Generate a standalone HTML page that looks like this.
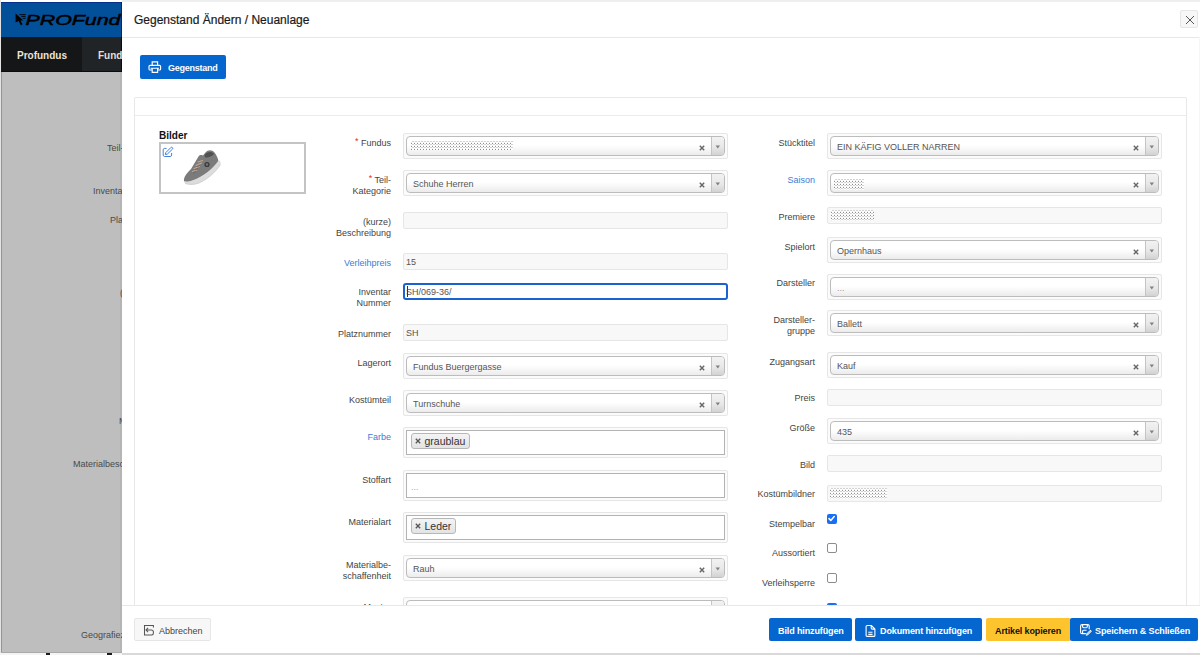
<!DOCTYPE html><html><head><meta charset="utf-8"><style>
*{margin:0;padding:0;box-sizing:border-box}
html,body{width:1200px;height:655px;overflow:hidden;background:#fff;font-family:"Liberation Sans",sans-serif;position:relative}
div,span{position:absolute}
.lbl{font-size:9px;text-align:right;white-space:nowrap;color:#555}
.req{position:relative;color:#e0302c;font-size:9px;vertical-align:top;top:-1.5px}
.so{height:26px;border:1px solid #e6e6e6;border-radius:2px;background:#fbfbfb}
.si{left:2px;top:2px;right:2px;bottom:2px;border:1px solid #bcbcbc;border-radius:4px;background:linear-gradient(to bottom,#fff 0%,#fff 45%,#ececec 100%);overflow:hidden}
.st{left:6px;top:4px;font-size:9px;color:#555;white-space:nowrap;line-height:12px}
.st.ph{color:#999}
.sx{right:19.5px;top:8px;width:6px;height:6px}
.sa{right:0;top:0;bottom:0;width:13px;border-left:1px solid #c4c4c4;background:linear-gradient(to bottom,#f2f2f2 0%,#e8e8e8 55%,#d2d2d2 100%)}
.sa b{position:absolute;left:3.5px;top:8.5px;width:0;height:0;border-left:2px solid transparent;border-right:2px solid transparent;border-top:3px solid #777}
.inp{height:17px;border:1px solid #e6e6e6;border-radius:2px;background:#f8f8f8}
.inp.foc{border:2px solid #1a62d0;background:#fff;border-radius:3px}
.it{left:2px;top:3px;font-size:9px;color:#555;line-height:11px;white-space:nowrap}
.foc .it{left:1px;top:2px}
.dot{background-color:#fff;background-image:conic-gradient(from 270deg at 1px 1px,#8e8e8e 90deg,transparent 0),conic-gradient(from 270deg at 2px 1px,#d2d2d2 90deg,transparent 0),conic-gradient(from 270deg at 1px 1px,#ececec 90deg,transparent 0);background-size:3px 3px,3px 3px,3px 3px;background-position:0 2px,1px 0,0 1px}
.mo{height:31px;border:1px solid #e6e6e6;border-radius:2px;background:#fbfbfb}
.mi{left:2px;top:2px;right:2px;bottom:2px;border:1px solid #b3b3b3;background:#fff}
.tag{left:3.5px;top:2px;height:16px;padding:0 4px 0 13px;border:1px solid #b7b7b7;border-radius:3px;background:linear-gradient(to bottom,#f4f4f4,#e3e3e3);font-size:10.5px;line-height:14px;color:#333;position:absolute;white-space:nowrap}
.tag .tx{left:3px;top:4px;width:6px;height:6px}
.mph{left:4px;top:8px;font-size:9px;color:#aaa}
.cb{width:10px;height:10px;border:1px solid #8c8c8c;border-radius:2px;background:#fff}
.cb.on{border:none;background:#1a6ef5}
.cb svg{position:absolute;left:0;top:0}
.btn{height:23px;border-radius:2px;background:#0566cf;color:#fff;font-size:9px;font-weight:bold;white-space:nowrap;letter-spacing:-0.12px}

</style></head><body>
<div style="left:122px;top:0;width:1078px;height:2px;background:#efefef"></div>
<div style="left:0;top:0;width:122px;height:655px;overflow:hidden">
<div style="left:1px;top:2px;width:121px;height:35px;background:#03509a;border-top:1px solid #062f8c"></div><div style="left:121px;top:2px;width:1px;height:35px;background:#0a1f7a"></div>
<div style="left:1px;top:37px;width:81px;height:35px;background:#141618"></div>
<div style="left:82px;top:37px;width:40px;height:35px;background:#212427"></div><div style="left:1px;top:71px;width:121px;height:1px;background:#0b0c0d"></div><div style="left:121px;top:37px;width:1px;height:35px;background:#0a0a14"></div>
<div style="left:0;top:0;width:1px;height:655px;background:#e4e4e4"></div><div style="left:1px;top:72px;width:121px;height:581px;background:#bebebe"></div><div style="left:1px;top:72px;width:1px;height:581px;background:#959595"></div><div style="left:120px;top:72px;width:2px;height:581px;background:#b5b5b5"></div>
<div style="left:17px;top:49px;font-size:10px;font-weight:bold;color:#ece4d6;line-height:14px">Profundus</div>
<div style="left:98px;top:49px;font-size:10px;font-weight:bold;color:#e6dfd2;line-height:14px">Fundus</div>
<svg style="position:absolute;left:12px;top:10px" width="14" height="17" viewBox="0 0 14 17"><path d="M3.6 3.6 L3.6 12.6 L6.6 10.9 L8.8 15.2 L10.6 14.3 L8.4 10.4 L11.4 10.4 Z" fill="#000"/><path d="M7.3 4.6 H13.6 M9.2 6.4 H13.6 M10.7 8.3 H13.6" stroke="#000" stroke-width="0.9"/></svg>
<svg style="position:absolute;left:25px;top:10px" width="110" height="20"><text x="0.5" y="15" font-family="Liberation Sans" font-style="italic" font-size="15" textLength="95" lengthAdjust="spacingAndGlyphs" fill="#000" stroke="#000" stroke-width="0.5">PROFund</text></svg>
<div style="left:107px;top:143px;font-size:9px;color:#4a4a4a;line-height:11px;white-space:nowrap">Teil-</div>
<div style="left:93px;top:186px;font-size:9px;color:#4a4a4a;line-height:11px;white-space:nowrap">Inventar</div>
<div style="left:110px;top:215px;font-size:9px;color:#4a4a4a;line-height:11px;white-space:nowrap">Platz</div>
<div style="left:120px;top:288px;font-size:9px;color:#4a4a4a;line-height:11px;white-space:nowrap">(kurze</div>
<div style="left:119px;top:416px;font-size:9px;color:#4a4a4a;line-height:11px;white-space:nowrap">Material</div>
<div style="left:73px;top:459px;font-size:9px;color:#4a4a4a;line-height:11px;white-space:nowrap">Materialbeschaffenheit</div>
<div style="left:81px;top:630px;font-size:9px;color:#4a4a4a;line-height:11px;white-space:nowrap">Geografiezone</div>
</div>
<div style="left:122px;top:2px;width:1078px;height:651px;background:#fff"></div>
<div style="left:122px;top:653px;width:1078px;height:2px;background:#d9d9d9"></div>
<div style="left:0;top:653px;width:122px;height:2px;background:#f4f4f4"></div><div style="left:46px;top:653px;width:4px;height:2px;background:#1a1a1a"></div><div style="left:107px;top:653px;width:5px;height:2px;background:#1a1a1a"></div><div style="left:1px;top:652px;width:121px;height:1px;background:#aaaaaa"></div>
<div style="left:134px;top:13px;font-size:12px;color:#1a1a1a;line-height:14px;white-space:nowrap;-webkit-text-stroke:0.2px #1a1a1a">Gegenstand Ändern / Neuanlage</div>
<div style="left:122px;top:37px;width:1078px;height:1px;background:#e8e8e8"></div>
<div style="left:1180px;top:10px;width:18px;height:18px;border:1px solid #e6e6e6;border-radius:2px;background:#f7f7f7"><svg style="position:absolute;left:3.5px;top:3.5px" width="10" height="10" viewBox="0 0 10 10"><path d="M1 1 L9 9 M9 1 L1 9" stroke="#444" stroke-width="0.9"/></svg></div>
<div class="btn" style="left:140px;top:55px;width:86px;height:24px"><svg style="position:absolute;left:8px;top:5px" width="14" height="14" viewBox="0 0 14 14"><path d="M4.2 4.8 V1.8 H9.6 V4.8 M4.2 10 H2.1 C1.4 10 1 9.6 1 8.9 V6.5 C1 5.8 1.4 5.4 2.1 5.4 H11.5 C12.2 5.4 12.6 5.8 12.6 6.5 V8.9 C12.6 9.6 12.2 10 11.5 10 H9.6 M2.6 8.2 H11 M4.2 8.2 V12.4 H9.6 V8.2" fill="none" stroke="#fff" stroke-width="1.15"/></svg><div style="left:28px;top:7px;line-height:12px;letter-spacing:-0.25px">Gegenstand</div></div>
<div style="left:134px;top:97px;width:1053px;height:520px;border:1px solid #e8e8e8;border-radius:2px"></div>
<div style="left:135px;top:115px;width:1051px;height:1px;background:#ececec"></div>
<div style="left:159px;top:130px;font-size:10px;font-weight:bold;color:#111;line-height:12px">Bilder</div>
<div style="left:159px;top:142px;width:147px;height:52px;border:2px solid #c4c4c4"></div>
<svg style="position:absolute;left:162px;top:146px" width="12" height="12" viewBox="0 0 12 12"><path d="M4.6 2.4 H2.6 C1.8 2.4 1.2 3 1.2 3.8 V9.1 C1.2 9.9 1.8 10.5 2.6 10.5 H8.2 C9 10.5 9.6 9.9 9.6 9.1 V7" fill="none" stroke="#3f80dc" stroke-width="1"/><path d="M3.3 8.5 L3.8 6.6 L8.9 1.5 C9.3 1.1 9.9 1.1 10.3 1.5 L10.5 1.7 C10.9 2.1 10.9 2.7 10.5 3.1 L5.3 8.1 Z" fill="none" stroke="#3f80dc" stroke-width="1"/></svg>
<svg style="position:absolute;left:178px;top:146px" width="48" height="44" viewBox="0 0 48 44"><path d="M6 35 C5.5 31 9 27 13 23 L20.5 10.5 C21.5 9 23 8.8 25 9.5 L27.5 6.5 C30 3.5 34 3.5 36.5 6.5 C38.5 9 40 12 40.5 15.5 L40.5 17.5 C34 24 23 32 13 35.5 C10 36.5 6.5 37 6 35 Z" fill="#7b7b7b"/><path d="M26.5 9 C29 5.5 33.5 5 36 8 C34 10.5 30 12 27 11.5 Z" fill="#505050"/><path d="M5.5 35 C7 39 14 39.5 21 37 C29 33.5 37 27 42.5 18.5 C43 16 42 14 40.5 14.5 C35 22.5 25 31 14 34.5 C10 35.8 7 35.5 5.5 35 Z" fill="#dcdcdc"/><path d="M7 37.5 C12 39 17 38.5 21 37 C29 33.5 37 27 42.5 18.5" fill="none" stroke="#c4c4c4" stroke-width="0.7"/><path d="M14.5 25.5 L19 24 M16 22.5 L21.5 20.5 M18 19.5 L23.5 17 M20 16 L24.5 14.5" stroke="#caa58d" stroke-width="1.1" stroke-linecap="round"/><path d="M15 27 L18 25.5 M17 23.8 L20 22.5 M19 20.8 L22 19.5" stroke="#5a5a5a" stroke-width="0.6"/><circle cx="29" cy="18.5" r="2.6" fill="#3a3a3a"/><circle cx="29" cy="18.5" r="1.2" fill="#777"/></svg>
<div class="lbl" style="right:809px;top:137.5px;color:#444;line-height:11.5px"><span class="req">*</span> Fundus</div>
<div class="so" style="left:403px;top:133px;width:325px"><div class="si">
<div class="dot" style="left:4px;top:4px;width:102px;height:9px"></div>
<svg class="sx" style="position:absolute" viewBox="0 0 6 6"><path d="M0.8 0.8 L5.2 5.2 M5.2 0.8 L0.8 5.2" stroke="#666" stroke-width="1.4"/></svg>
<div class="sa"><svg style="position:absolute;left:3px;top:8px" width="6" height="4" viewBox="0 0 6 4"><path d="M0.6 0.4 H5 L2.8 3.4 Z" fill="#808080"/></svg></div></div></div>
<div class="lbl" style="right:809px;top:174.5px;color:#444;line-height:11.5px"><span class="req">*</span> Teil-<br>Kategorie</div>
<div class="so" style="left:403px;top:170px;width:325px"><div class="si">
<div class="st">Schuhe Herren</div>
<svg class="sx" style="position:absolute" viewBox="0 0 6 6"><path d="M0.8 0.8 L5.2 5.2 M5.2 0.8 L0.8 5.2" stroke="#666" stroke-width="1.4"/></svg>
<div class="sa"><svg style="position:absolute;left:3px;top:8px" width="6" height="4" viewBox="0 0 6 4"><path d="M0.6 0.4 H5 L2.8 3.4 Z" fill="#808080"/></svg></div></div></div>
<div class="lbl" style="right:809px;top:216.5px;color:#444;line-height:11.5px">(kurze)<br>Beschreibung</div>
<div class="inp" style="left:403px;top:212px;width:325px">
</div>
<div class="lbl" style="right:809px;top:257.5px;color:#3b7dd8;line-height:11.5px">Verleihpreis</div>
<div class="inp" style="left:403px;top:253px;width:325px">
<div class="it">15</div>
</div>
<div class="lbl" style="right:809px;top:286.5px;color:#444;line-height:11.5px">Inventar<br>Nummer</div>
<div class="inp foc" style="left:403px;top:283px;width:325px">
<div class="it">SH/069-36/</div>
<div style="left:1.5px;top:1px;width:1px;height:11px;background:#333"></div>
</div>
<div class="lbl" style="right:809px;top:328.5px;color:#444;line-height:11.5px">Platznummer</div>
<div class="inp" style="left:403px;top:324px;width:325px">
<div class="it">SH</div>
</div>
<div class="lbl" style="right:809px;top:357.5px;color:#444;line-height:11.5px">Lagerort</div>
<div class="so" style="left:403px;top:353px;width:325px"><div class="si">
<div class="st">Fundus Buergergasse</div>
<svg class="sx" style="position:absolute" viewBox="0 0 6 6"><path d="M0.8 0.8 L5.2 5.2 M5.2 0.8 L0.8 5.2" stroke="#666" stroke-width="1.4"/></svg>
<div class="sa"><svg style="position:absolute;left:3px;top:8px" width="6" height="4" viewBox="0 0 6 4"><path d="M0.6 0.4 H5 L2.8 3.4 Z" fill="#808080"/></svg></div></div></div>
<div class="lbl" style="right:809px;top:394.5px;color:#444;line-height:11.5px">Kostümteil</div>
<div class="so" style="left:403px;top:390px;width:325px"><div class="si">
<div class="st">Turnschuhe</div>
<svg class="sx" style="position:absolute" viewBox="0 0 6 6"><path d="M0.8 0.8 L5.2 5.2 M5.2 0.8 L0.8 5.2" stroke="#666" stroke-width="1.4"/></svg>
<div class="sa"><svg style="position:absolute;left:3px;top:8px" width="6" height="4" viewBox="0 0 6 4"><path d="M0.6 0.4 H5 L2.8 3.4 Z" fill="#808080"/></svg></div></div></div>
<div class="lbl" style="right:809px;top:431.5px;color:#3b7dd8;line-height:11.5px">Farbe</div>
<div class="mo" style="left:403px;top:427px;width:325px"><div class="mi">
<div class="tag"><svg class="tx" style="position:absolute" viewBox="0 0 6 6"><path d="M0.8 0.8 L5.2 5.2 M5.2 0.8 L0.8 5.2" stroke="#555" stroke-width="1.3"/></svg>graublau</div>
</div></div>
<div class="lbl" style="right:809px;top:474.5px;color:#444;line-height:11.5px">Stoffart</div>
<div class="mo" style="left:403px;top:470px;width:325px"><div class="mi">
<div class="mph">...</div>
</div></div>
<div class="lbl" style="right:809px;top:516.5px;color:#444;line-height:11.5px">Materialart</div>
<div class="mo" style="left:403px;top:512px;width:325px"><div class="mi">
<div class="tag"><svg class="tx" style="position:absolute" viewBox="0 0 6 6"><path d="M0.8 0.8 L5.2 5.2 M5.2 0.8 L0.8 5.2" stroke="#555" stroke-width="1.3"/></svg>Leder</div>
</div></div>
<div class="lbl" style="right:809px;top:559.5px;color:#444;line-height:11.5px">Materialbe-<br>schaffenheit</div>
<div class="so" style="left:403px;top:555px;width:325px"><div class="si">
<div class="st">Rauh</div>
<svg class="sx" style="position:absolute" viewBox="0 0 6 6"><path d="M0.8 0.8 L5.2 5.2 M5.2 0.8 L0.8 5.2" stroke="#666" stroke-width="1.4"/></svg>
<div class="sa"><svg style="position:absolute;left:3px;top:8px" width="6" height="4" viewBox="0 0 6 4"><path d="M0.6 0.4 H5 L2.8 3.4 Z" fill="#808080"/></svg></div></div></div>
<div class="lbl" style="right:809px;top:601.5px;color:#444;line-height:11.5px">Muster</div>
<div class="so" style="left:403px;top:597px;width:325px"><div class="si">
<svg class="sx" style="position:absolute" viewBox="0 0 6 6"><path d="M0.8 0.8 L5.2 5.2 M5.2 0.8 L0.8 5.2" stroke="#666" stroke-width="1.4"/></svg>
<div class="sa"><svg style="position:absolute;left:3px;top:8px" width="6" height="4" viewBox="0 0 6 4"><path d="M0.6 0.4 H5 L2.8 3.4 Z" fill="#808080"/></svg></div></div></div>
<div class="lbl" style="right:385px;top:137.5px;color:#444;line-height:11.5px">Stücktitel</div>
<div class="so" style="left:827px;top:133px;width:335px"><div class="si">
<div class="st">EIN KÄFIG VOLLER NARREN</div>
<svg class="sx" style="position:absolute" viewBox="0 0 6 6"><path d="M0.8 0.8 L5.2 5.2 M5.2 0.8 L0.8 5.2" stroke="#666" stroke-width="1.4"/></svg>
<div class="sa"><svg style="position:absolute;left:3px;top:8px" width="6" height="4" viewBox="0 0 6 4"><path d="M0.6 0.4 H5 L2.8 3.4 Z" fill="#808080"/></svg></div></div></div>
<div class="lbl" style="right:385px;top:174.5px;color:#3b7dd8;line-height:11.5px">Saison</div>
<div class="so" style="left:827px;top:170px;width:335px"><div class="si">
<div class="dot" style="left:3px;top:5px;width:30px;height:11px"></div>
<svg class="sx" style="position:absolute" viewBox="0 0 6 6"><path d="M0.8 0.8 L5.2 5.2 M5.2 0.8 L0.8 5.2" stroke="#666" stroke-width="1.4"/></svg>
<div class="sa"><svg style="position:absolute;left:3px;top:8px" width="6" height="4" viewBox="0 0 6 4"><path d="M0.6 0.4 H5 L2.8 3.4 Z" fill="#808080"/></svg></div></div></div>
<div class="lbl" style="right:385px;top:211.5px;color:#444;line-height:11.5px">Premiere</div>
<div class="inp" style="left:827px;top:207px;width:335px">
<div class="dot" style="left:3px;top:2px;width:43px;height:11px"></div>
</div>
<div class="lbl" style="right:385px;top:241.5px;color:#444;line-height:11.5px">Spielort</div>
<div class="so" style="left:827px;top:237px;width:335px"><div class="si">
<div class="st">Opernhaus</div>
<svg class="sx" style="position:absolute" viewBox="0 0 6 6"><path d="M0.8 0.8 L5.2 5.2 M5.2 0.8 L0.8 5.2" stroke="#666" stroke-width="1.4"/></svg>
<div class="sa"><svg style="position:absolute;left:3px;top:8px" width="6" height="4" viewBox="0 0 6 4"><path d="M0.6 0.4 H5 L2.8 3.4 Z" fill="#808080"/></svg></div></div></div>
<div class="lbl" style="right:385px;top:277.5px;color:#444;line-height:11.5px">Darsteller</div>
<div class="so" style="left:827px;top:274px;width:335px"><div class="si">
<div class="st ph">...</div>
<div class="sa"><svg style="position:absolute;left:3px;top:8px" width="6" height="4" viewBox="0 0 6 4"><path d="M0.6 0.4 H5 L2.8 3.4 Z" fill="#808080"/></svg></div></div></div>
<div class="lbl" style="right:385px;top:314.5px;color:#444;line-height:11.5px">Darsteller-<br>gruppe</div>
<div class="so" style="left:827px;top:310px;width:335px"><div class="si">
<div class="st">Ballett</div>
<svg class="sx" style="position:absolute" viewBox="0 0 6 6"><path d="M0.8 0.8 L5.2 5.2 M5.2 0.8 L0.8 5.2" stroke="#666" stroke-width="1.4"/></svg>
<div class="sa"><svg style="position:absolute;left:3px;top:8px" width="6" height="4" viewBox="0 0 6 4"><path d="M0.6 0.4 H5 L2.8 3.4 Z" fill="#808080"/></svg></div></div></div>
<div class="lbl" style="right:385px;top:356.5px;color:#444;line-height:11.5px">Zugangsart</div>
<div class="so" style="left:827px;top:352px;width:335px"><div class="si">
<div class="st">Kauf</div>
<svg class="sx" style="position:absolute" viewBox="0 0 6 6"><path d="M0.8 0.8 L5.2 5.2 M5.2 0.8 L0.8 5.2" stroke="#666" stroke-width="1.4"/></svg>
<div class="sa"><svg style="position:absolute;left:3px;top:8px" width="6" height="4" viewBox="0 0 6 4"><path d="M0.6 0.4 H5 L2.8 3.4 Z" fill="#808080"/></svg></div></div></div>
<div class="lbl" style="right:385px;top:392.5px;color:#444;line-height:11.5px">Preis</div>
<div class="inp" style="left:827px;top:389px;width:335px">
</div>
<div class="lbl" style="right:385px;top:422.5px;color:#444;line-height:11.5px">Größe</div>
<div class="so" style="left:827px;top:418px;width:335px"><div class="si">
<div class="st">435</div>
<svg class="sx" style="position:absolute" viewBox="0 0 6 6"><path d="M0.8 0.8 L5.2 5.2 M5.2 0.8 L0.8 5.2" stroke="#666" stroke-width="1.4"/></svg>
<div class="sa"><svg style="position:absolute;left:3px;top:8px" width="6" height="4" viewBox="0 0 6 4"><path d="M0.6 0.4 H5 L2.8 3.4 Z" fill="#808080"/></svg></div></div></div>
<div class="lbl" style="right:385px;top:459.5px;color:#444;line-height:11.5px">Bild</div>
<div class="inp" style="left:827px;top:455px;width:335px">
</div>
<div class="lbl" style="right:385px;top:488.5px;color:#444;line-height:11.5px">Kostümbildner</div>
<div class="inp" style="left:827px;top:485px;width:335px">
<div class="dot" style="left:2px;top:2px;width:57px;height:11px"></div>
</div>
<div class="lbl" style="right:385px;top:518.5px;color:#444;line-height:11.5px">Stempelbar</div>
<div class="cb on" style="left:827px;top:514px"><svg width="9" height="9" viewBox="0 0 9 9"><path d="M2 4.6 L3.8 6.4 L7.2 2.6" fill="none" stroke="#fff" stroke-width="1.5" stroke-linecap="round" stroke-linejoin="round"/></svg></div>
<div class="lbl" style="right:385px;top:547.5px;color:#444;line-height:11.5px">Aussortiert</div>
<div class="cb" style="left:827px;top:543px"></div>
<div class="lbl" style="right:385px;top:577.5px;color:#444;line-height:11.5px">Verleihsperre</div>
<div class="cb" style="left:827px;top:573px"></div>
<div class="cb on" style="left:827px;top:603px"><svg width="9" height="9" viewBox="0 0 9 9"><path d="M2 4.6 L3.8 6.4 L7.2 2.6" fill="none" stroke="#fff" stroke-width="1.5" stroke-linecap="round" stroke-linejoin="round"/></svg></div>
<div style="left:122px;top:605px;width:1078px;height:48px;background:#fff;border-top:1px solid #e8e8e8"></div>
<div style="left:134px;top:618px;width:77px;height:23px;border:1px solid #e6e6e6;border-radius:2px;background:#f7f7f7"><svg style="position:absolute;left:8px;top:5px" width="12" height="12" viewBox="0 0 12 12"><path d="M10.4 3.4 V1.5 H1.5 V11 H8.7 C9.8 11 10.4 10.2 10.4 9 V8 C10.4 6.8 9.6 6 8.3 6 H3 M5.1 3.9 L3 6 L5.1 8.1" fill="none" stroke="#555" stroke-width="1.05"/></svg><div style="left:24px;top:6px;font-size:9px;color:#444;line-height:12px">Abbrechen</div></div>
<div class="btn" style="left:769px;top:618px;width:83px"><div style="left:9px;top:7px;line-height:12px">Bild hinzufügen</div></div>
<div class="btn" style="left:855px;top:618px;width:127px"><svg style="position:absolute;left:10px;top:5.5px" width="11" height="13" viewBox="0 0 11 13"><path d="M1.1 2.6 C1.1 1.8 1.6 1.5 2.3 1.5 H6.4 L9.9 5 V11.4 C9.9 12 9.5 12.4 8.9 12.4 H2.1 C1.5 12.4 1.1 12 1.1 11.4 Z M6.2 1.8 V4 C6.2 4.7 6.6 5.1 7.3 5.1 H9.6 M3.3 8.2 H7.5 M3.3 10.4 H7.5" fill="none" stroke="#fff" stroke-width="1.1"/></svg><div style="left:25px;top:7px;line-height:12px">Dokument hinzufügen</div></div>
<div class="btn" style="left:986px;top:618px;width:85px;background:#fec42d;color:#111"><div style="left:9px;top:7px;line-height:12px">Artikel kopieren</div></div>
<div class="btn" style="left:1070px;top:618px;width:128px"><svg style="position:absolute;left:9px;top:5px" width="14" height="14" viewBox="0 0 14 14"><path d="M7.2 10.6 H3 C2.2 10.6 1.6 10 1.6 9.2 V3 C1.6 2.2 2.2 1.6 3 1.6 H8.8 C9.6 1.6 10.2 2.2 10.2 3 V6.2 M3.6 1.8 V3.6 C3.6 4.3 4 4.7 4.7 4.7 H7.2 C7.9 4.7 8.3 4.3 8.3 3.6 V1.8 M3.6 10.5 V8.2 C3.6 7.6 4 7.2 4.6 7.2 H7.6" fill="none" stroke="#fff" stroke-width="1.1"/><path d="M6.8 12.8 L7.3 10.8 L11.4 6.7 L12.9 8.2 L8.8 12.3 Z" fill="#fff"/><path d="M8 11.6 L11.6 8" stroke="#0566cf" stroke-width="0.5"/></svg><div style="left:25px;top:7px;line-height:12px">Speichern &amp; Schließen</div></div>
<div style="left:1199px;top:37px;width:1px;height:568px;background:#f6f6f6"></div>
</body></html>
